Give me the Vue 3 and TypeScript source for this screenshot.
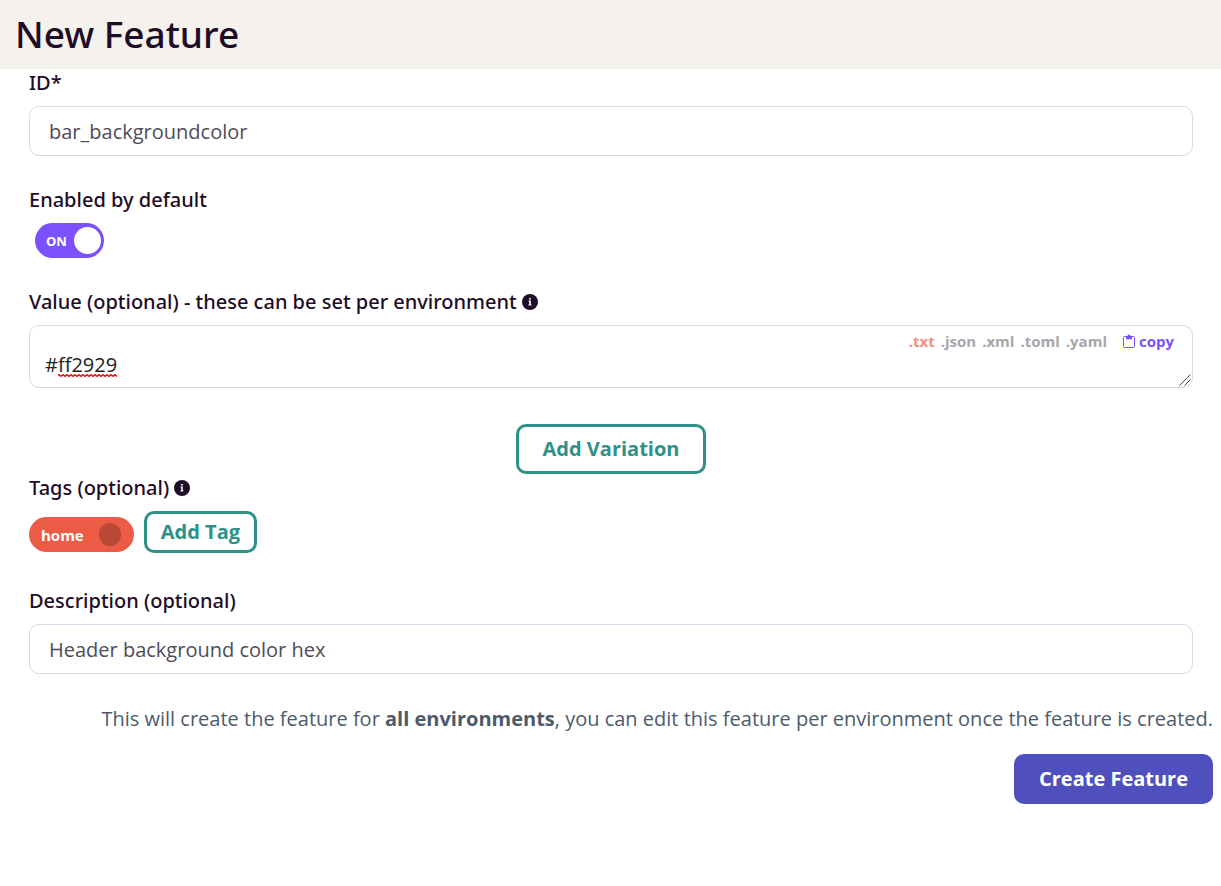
<script setup lang="ts">
import { ref } from 'vue'

const id = ref('bar_backgroundcolor')
const enabled = ref(true)
const value = ref('#ff2929')
const description = ref('Header background color hex')
const formats = ['.txt', '.json', '.xml', '.toml', '.yaml']
const format = ref('.txt')
const tags = ref(['home'])

function removeTag(tag: string) {
  tags.value = tags.value.filter((t) => t !== tag)
}
</script>

<template>
  <div class="page">
    <header class="header">
      <h1 class="title">New Feature</h1>
    </header>

    <form @submit.prevent>
      <div class="fields">
        <div class="field">
          <label class="label" for="feature-id">ID*</label>
          <input id="feature-id" v-model="id" class="input" type="text" />
        </div>

        <div class="field">
          <label class="label" for="feature-enabled">Enabled by default</label>
          <label class="switch" :class="{ off: !enabled }" for="feature-enabled">
            <input id="feature-enabled" v-model="enabled" class="switch-box" type="checkbox" />
            <span>{{ enabled ? 'ON' : 'OFF' }}</span>
            <span class="knob"></span>
          </label>
        </div>

        <div class="field value-field">
          <label class="label" for="feature-value">
            Value (optional) - these can be set per environment
            <svg class="info" viewBox="0 0 16 16" aria-hidden="true">
              <circle cx="8" cy="8" r="8" />
              <path d="M6.9 6.4h1.9v4.2h.6v1H6.4v-1h.8V7.4h-.7v-1zM7.1 4h1.7v1.6H7.1z" />
            </svg>
          </label>
          <div class="editor">
            <textarea id="feature-value" v-model="value" class="textarea" spellcheck="false"></textarea>
            <svg class="squiggle" aria-hidden="true">
              <defs>
                <pattern id="wave" width="4" height="3" patternUnits="userSpaceOnUse">
                  <path d="M-1 2.3 1 .7 3 2.3 5 .7" />
                </pattern>
              </defs>
              <rect width="100%" height="3" fill="url(#wave)" />
            </svg>
            <svg class="grip" viewBox="0 0 12 12" aria-hidden="true">
              <path d="M.5 11.5l11-11M5.5 11.5l6-6" />
            </svg>
            <div class="toolbar">
              <button
                v-for="f in formats"
                :key="f"
                type="button"
                class="format"
                :class="{ active: f === format }"
                @click="format = f"
              >{{ f }}</button>
              <button type="button" class="copy">
                <svg class="clipboard" viewBox="0 0 12 14" aria-hidden="true">
                  <path class="sheet" d="M1.5 2.5h9a1 1 0 0 1 1 1v9a1 1 0 0 1-1 1h-9a1 1 0 0 1-1-1v-9a1 1 0 0 1 1-1z" />
                  <path class="clip" d="M3 2h1.5a1.5 1.5 0 0 1 3 0H9v3.2H3z" />
                </svg>
                copy
              </button>
            </div>
          </div>
        </div>

        <button type="button" class="outline variation">Add Variation</button>

        <div class="field tags-field">
          <div class="label">
            Tags (optional)
            <svg class="info" viewBox="0 0 16 16" aria-hidden="true">
              <circle cx="8" cy="8" r="8" />
              <path d="M6.9 6.4h1.9v4.2h.6v1H6.4v-1h.8V7.4h-.7v-1zM7.1 4h1.7v1.6H7.1z" />
            </svg>
          </div>
          <div class="tags">
            <span v-for="tag in tags" :key="tag" class="tag">
              {{ tag }}
              <button type="button" class="remove" :aria-label="'Remove ' + tag" @click="removeTag(tag)"></button>
            </span>
            <button type="button" class="outline add-tag">Add Tag</button>
          </div>
        </div>

        <div class="field">
          <label class="label" for="feature-description">Description (optional)</label>
          <input id="feature-description" v-model="description" class="input" type="text" />
        </div>
      </div>

      <footer class="footer">
        <p class="note">
          This will create the feature for <strong>all environments</strong>, you can edit this feature per
          environment once the feature is created.
        </p>
        <button type="submit" class="create">Create Feature</button>
      </footer>
    </form>
  </div>
</template>

<style>
body {
  background: #fff;
}
</style>

<style scoped>
.page,
.page * {
  box-sizing: border-box;
}
.page {
  font-family: 'Open Sans', sans-serif;
  font-size: 20px;
  line-height: 28px;
  color: #1e0d26;
}
button,
input,
textarea {
  font: inherit;
}
button {
  cursor: pointer;
}
.header {
  padding: 10px 15px 11px;
  background: #f5f1ed;
}
.title {
  margin: 0;
  font-family: 'Noto Sans', sans-serif;
  font-size: 37px;
  line-height: 48px;
  font-weight: 500;
}
.fields {
  display: flex;
  flex-direction: column;
  padding: 0 28px 0 29px;
}
.field {
  display: flex;
  flex-direction: column;
  align-items: flex-start;
  gap: 9px;
  margin-bottom: 30px;
}
.label {
  font-family: 'Noto Sans', sans-serif;
  font-weight: 500;
}
.info {
  width: 16px;
  height: 16px;
  vertical-align: -1px;
  fill: #1e0d26;
}
.info path {
  fill: #fff;
}
.input {
  width: 100%;
  height: 50px;
  padding: 0 19px;
  border: 1px solid #d9d7e8;
  border-radius: 10px;
  background: #fff;
  color: #4e4c58;
}
.switch {
  position: relative;
  display: flex;
  align-items: center;
  justify-content: space-between;
  width: 69px;
  height: 35px;
  margin-left: 6px;
  padding: 0 3px 0 11px;
  border-radius: 18px;
  background: #7b51fb;
  color: #fff;
  font-size: 13px;
  font-weight: 700;
  cursor: pointer;
}
.switch.off {
  background: #a6a6ab;
}
.switch-box {
  position: absolute;
  inset: 0;
  width: 100%;
  height: 100%;
  margin: 0;
  opacity: 0;
}
.knob {
  width: 27px;
  height: 27px;
  border-radius: 50%;
  background: #fff;
}
.value-field {
  margin-bottom: 36px;
}
.editor {
  position: relative;
  width: 100%;
}
.textarea {
  display: block;
  width: 100%;
  height: 63px;
  padding: 25px 15px 8px;
  border: 1px solid #d9d7e8;
  border-radius: 10px;
  background: #fff;
  color: #222;
  resize: vertical;
  overflow: hidden;
}
.textarea::-webkit-resizer {
  background: transparent;
}
.grip {
  position: absolute;
  right: 2px;
  bottom: 2px;
  width: 12px;
  height: 12px;
  fill: none;
  stroke: #444;
  pointer-events: none;
}
.squiggle {
  position: absolute;
  left: 29px;
  top: 49px;
  width: 59px;
  height: 3px;
  pointer-events: none;
}
.squiggle path {
  fill: none;
  stroke: #f00;
  stroke-width: 1.4;
}
.toolbar {
  position: absolute;
  top: 6px;
  right: 19px;
  display: flex;
  gap: 6px;
  font-size: 15px;
  line-height: 20px;
  font-weight: 700;
}
.format,
.copy {
  padding: 0;
  border: 0;
  background: none;
  color: #a6a6ab;
}
.format.active {
  color: #f28d7f;
}
.copy {
  display: flex;
  align-items: center;
  gap: 4px;
  margin-left: 10px;
  color: #7b51fb;
}
.clipboard {
  width: 12px;
  height: 14px;
}
.sheet {
  fill: none;
  stroke: #7b51fb;
}
.clip {
  fill: #7b51fb;
}
.outline {
  border: 3px solid #2d9187;
  border-radius: 10px;
  background: #fff;
  color: #2d9187;
  font-weight: 700;
}
.variation {
  align-self: center;
  height: 50px;
  padding: 0 24px;
}
.tags-field {
  margin-bottom: 34px;
}
.tags {
  display: flex;
  align-items: center;
  gap: 10px;
}
.tag {
  display: flex;
  align-items: center;
  gap: 15px;
  height: 35px;
  margin-top: 5px;
  padding: 0 13px 0 12px;
  border-radius: 18px;
  background: #ec5b46;
  color: #fff;
  font-size: 15px;
  font-weight: 700;
}
.remove {
  width: 22px;
  height: 23px;
  padding: 0;
  border: 0;
  border-radius: 50%;
  background: #b94836;
}
.add-tag {
  height: 42px;
  padding: 0 14px;
}
.footer {
  display: flex;
  flex-direction: column;
  align-items: flex-end;
  gap: 21px;
  padding: 1px 8px 80px;
}
.note {
  margin: 0;
  color: #4c5b6c;
}
.create {
  height: 50px;
  padding: 0 25px;
  border: 0;
  border-radius: 10px;
  background: #4f50be;
  color: #fff;
  font-weight: 700;
}
</style>
